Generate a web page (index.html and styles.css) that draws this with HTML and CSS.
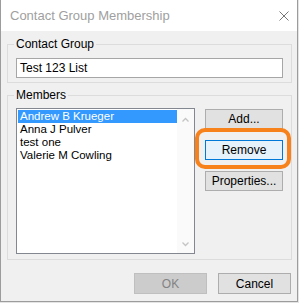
FILE: index.html
```html
<!DOCTYPE html>
<html lang="en">
<head>
  <meta charset="UTF-8">
  <title>Contact Group Membership</title>
  <link rel="stylesheet" href="styles.css">
</head>
<body>
  <div class="dialog">
    <div class="titlebar">
      <span class="title">Contact Group Membership</span>
      <svg class="close" width="10" height="10" viewBox="0 0 10 10">
        <path d="M0.5 0.5 L9.5 9.5 M9.5 0.5 L0.5 9.5" stroke="#777" stroke-width="1" fill="none"/>
      </svg>
    </div>

    <div class="client">
      <fieldset class="group contact">
        <legend>Contact Group</legend>
        <div class="textbox">Test 123 List</div>
      </fieldset>

      <fieldset class="group members">
        <legend>Members</legend>
        <div class="members-body">
          <div class="listbox">
            <ul class="items">
              <li class="selected">Andrew B Krueger</li>
              <li>Anna J Pulver</li>
              <li>test one</li>
              <li>Valerie M Cowling</li>
            </ul>
            <div class="scrollbar">
              <svg width="7" height="5" viewBox="0 0 7 5">
                <path d="M0.5 4.5 L3.5 1.5 L6.5 4.5" stroke="#c4c4c4" stroke-width="1.3" fill="none"/>
              </svg>
              <svg width="7" height="5" viewBox="0 0 7 5">
                <path d="M0.5 0.5 L3.5 3.5 L6.5 0.5" stroke="#c4c4c4" stroke-width="1.3" fill="none"/>
              </svg>
            </div>
          </div>

          <div class="side">
            <button class="btn">Add...</button>
            <span class="callout"><button class="btn focused">Remove</button></span>
            <button class="btn">Properties...</button>
          </div>
        </div>
      </fieldset>

      <div class="footer">
        <button class="btn wide disabled">OK</button>
        <button class="btn wide">Cancel</button>
      </div>
    </div>
  </div>
</body>
</html>
```

FILE: styles.css
```css
body {
  margin: 0;
  background: #e4e4e4;
  font-family: "Liberation Sans", Arial, sans-serif;
  font-size: 12px;
  color: #000;
}

.dialog {
  width: 296px;
  height: 301px;
  border: 1px solid #9c9c9c;
  border-top: 0;
  background: #f0f0f0;
  display: flex;
  flex-direction: column;
}

.titlebar {
  height: 31px;
  background: #fff;
  display: flex;
  align-items: center;
  justify-content: space-between;
  padding: 0 8px 0 9px;
}

.title { color: #a0a0a0; font-size: 13px; }

.client {
  flex: 1;
  display: flex;
  flex-direction: column;
  padding: 5px 5px 7px 6px;
}

.group {
  margin: 0;
  min-width: 0;
  border: 1px solid #dcdcdc;
}

.group legend {
  padding: 0 2px;
  margin-left: -2px;
  line-height: 16px;
}

.contact { padding: 6px 8px 4px 8px; }

.textbox {
  height: 18px;
  line-height: 18px;
  border: 1px solid #a6a6a6;
  background: #fff;
  padding: 0 3px;
}

.members {
  margin-top: 4px;
  padding: 5px 8px 5px 8px;
}

.members-body {
  display: flex;
  gap: 10px;
}

.listbox {
  width: 177px;
  height: 144px;
  border: 1px solid #828790;
  background: #fff;
  display: flex;
}

.items {
  flex: 1;
  list-style: none;
  margin: 0;
  padding: 1px 0 0 1px;
  font-size: 11.5px;
}

.items li {
  height: 13px;
  line-height: 13px;
  padding-left: 2px;
  white-space: nowrap;
}

.items li.selected {
  background: #3399ff;
  color: #fff;
}

.scrollbar {
  width: 17px;
  background: #fafafa;
  display: flex;
  flex-direction: column;
  justify-content: space-between;
  align-items: center;
  padding: 8px 0 6px;
  box-sizing: border-box;
}

.side {
  width: 78px;
  display: flex;
  flex-direction: column;
  gap: 11px;
  padding-top: 1px;
}

.btn {
  font: inherit;
  color: #000;
  height: 20px;
  width: 78px;
  padding: 0;
  border: 1px solid #adadad;
  background: #e1e1e1;
}

.btn.focused {
  border-color: #0078d7;
  background: #e5f1fb;
}

.callout {
  position: relative;
  display: block;
  height: 20px;
}

.callout::before {
  content: "";
  position: absolute;
  left: -10px;
  right: -8px;
  top: -12px;
  bottom: -9px;
  border: 4px solid #f7821b;
  border-radius: 10px;
}

.footer {
  margin-top: 13px;
  display: flex;
  justify-content: flex-end;
  gap: 11px;
  padding-right: 1px;
}

.btn.wide {
  width: 73px;
  height: 21px;
}

.btn.disabled {
  background: #cccccc;
  border-color: #bfbfbf;
  color: #838383;
}
```
